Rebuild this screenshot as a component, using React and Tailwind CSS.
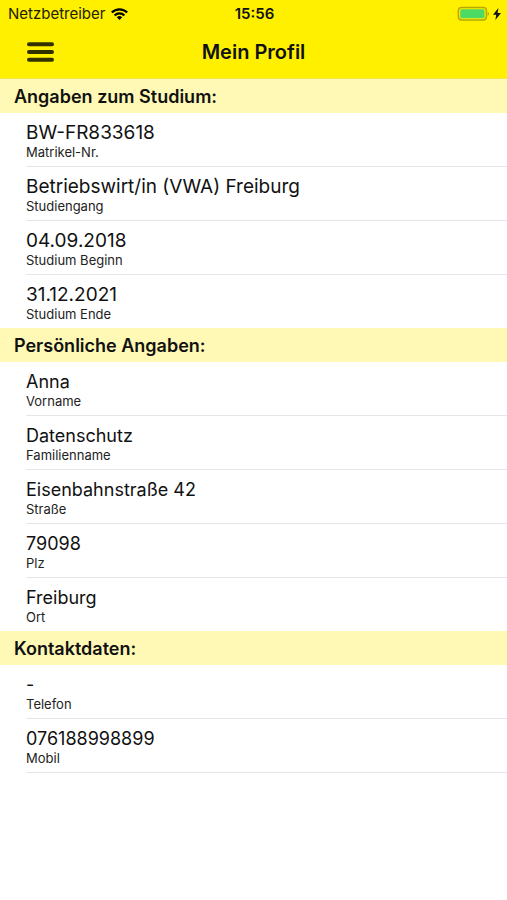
const sections = [
  {
    title: 'Angaben zum Studium:',
    valueSize: 'text-[19px]',
    rows: [
      { label: 'Matrikel-Nr.', value: 'BW-FR833618' },
      { label: 'Studiengang', value: 'Betriebswirt/in (VWA) Freiburg' },
      { label: 'Studium Beginn', value: '04.09.2018' },
      { label: 'Studium Ende', value: '31.12.2021' },
    ],
  },
  {
    title: 'Persönliche Angaben:',
    valueSize: 'text-[18px]',
    rows: [
      { label: 'Vorname', value: 'Anna' },
      { label: 'Familienname', value: 'Datenschutz' },
      { label: 'Straße', value: 'Eisenbahnstraße 42' },
      { label: 'Plz', value: '79098' },
      { label: 'Ort', value: 'Freiburg' },
    ],
  },
  {
    title: 'Kontaktdaten:',
    valueSize: 'text-[18px]',
    rows: [
      { label: 'Telefon', value: '-' },
      { label: 'Mobil', value: '076188998899' },
    ],
  },
];

function StatusBar() {
  return (
    <div className="grid h-7 grid-cols-[1fr_auto_1fr] items-center pl-2 pr-1.5 text-[15px] leading-5">
      <div className="flex items-center gap-1.5 text-[#222200]">
        <span>Netzbetreiber</span>
        <svg className="h-3 w-[17px] shrink-0 text-black" viewBox="0 0 17 12" fill="none" stroke="currentColor" strokeWidth="2.2">
          <path d="M0.8 4.5a10.9 10.9 0 0 1 15.4 0" />
          <path d="M3.6 7.4a6.9 6.9 0 0 1 9.8 0" />
          <path d="M8.5 12 5.8 9.3a3.8 3.8 0 0 1 5.4 0z" fill="currentColor" stroke="none" />
        </svg>
      </div>
      <span className="text-center font-semibold">15:56</span>
      <div className="flex items-center justify-end gap-1">
        <svg className="h-4 w-8" viewBox="0 0 32 16" fill="none">
          <rect x="1.4" y="1.4" width="28" height="12.6" rx="3.2" stroke="#b5a800" strokeWidth="1.5" />
          <rect x="3.3" y="3.2" width="24.2" height="9" rx="1.5" fill="#4cd964" />
          <path d="M30.6 5.4c1.8.8 1.8 3.8 0 4.6z" fill="#b5a800" />
        </svg>
        <svg className="h-3 w-2" viewBox="0 0 8 12" fill="currentColor">
          <path d="M5.4 0 0 6.8h3.2L2.4 12 8 5H4.6z" />
        </svg>
      </div>
    </div>
  );
}

function Section({ title, valueSize, rows }) {
  return (
    <section className="group">
      <h2 className="h-[34px] bg-[#fff9b5] pl-3.5 text-lg leading-9 font-semibold">{title}</h2>
      <dl className="pl-[26px]">
        {rows.map((row) => (
          <div
            key={row.label}
            className="flex h-[54px] flex-col-reverse justify-end border-b border-[#e6e6e8] pt-2 last:h-[53px] last:border-b-0 group-last:last:h-[54px] group-last:last:border-b"
          >
            <dt className="text-[13px] leading-[14px] text-[#222]">{row.label}</dt>
            <dd className={`${valueSize} leading-6`}>{row.value}</dd>
          </div>
        ))}
      </dl>
    </section>
  );
}

export default function App() {
  return (
    <div className="min-h-screen bg-white font-['Inter',sans-serif] text-[#111]">
      <header className="border-b border-[#f5e94a] bg-[#fff000]">
        <StatusBar />
        <div className="grid h-[50px] grid-cols-[1fr_auto_1fr] items-center pb-0.5">
          <button type="button" aria-label="Menü" className="ml-[27px] w-7">
            <svg className="h-5 w-7" viewBox="0 0 28 20" fill="#333000">
              <rect y="0.3" width="27" height="4" rx="2" />
              <rect y="8" width="27" height="4" rx="2" />
              <rect y="15.7" width="27" height="4" rx="2" />
            </svg>
          </button>
          <h1 className="text-xl font-semibold">Mein Profil</h1>
        </div>
      </header>
      <main>
        {sections.map((section) => (
          <Section key={section.title} {...section} />
        ))}
      </main>
    </div>
  );
}
